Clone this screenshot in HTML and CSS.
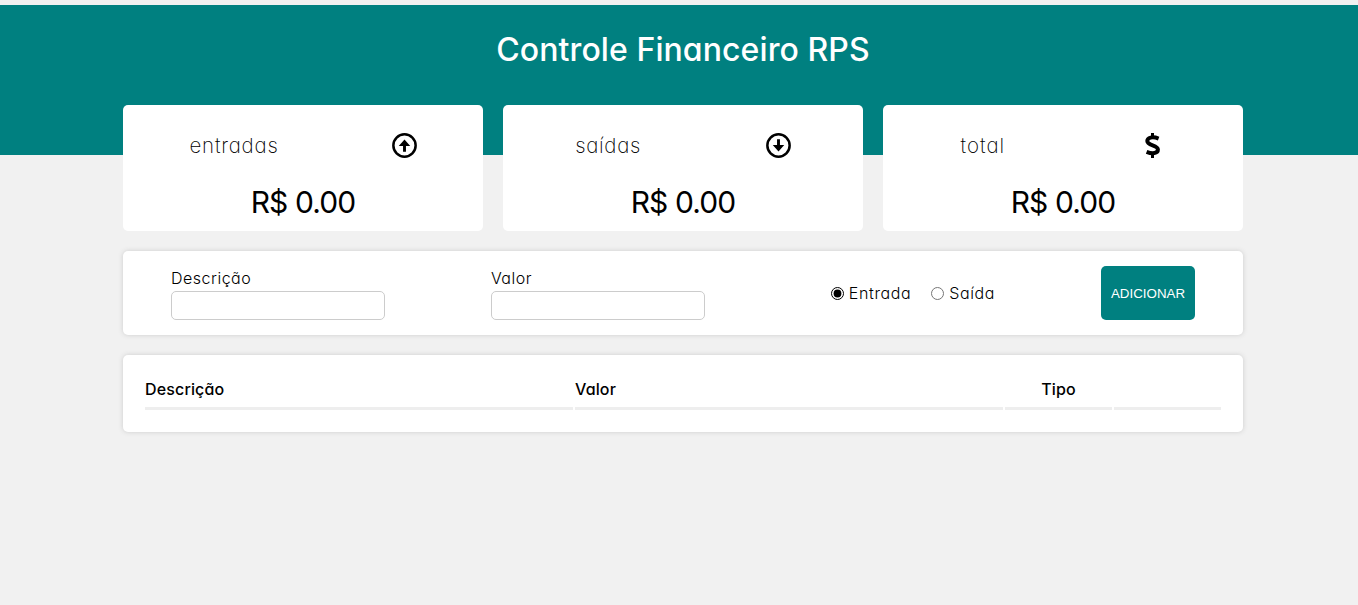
FILE: index.html
```
<!DOCTYPE html>
<html lang="pt-br">
<head>
<meta charset="UTF-8">
<title>Controle Financeiro RPS</title>
<link rel="stylesheet" href="styles.css">
</head>
<body>
<header class="header"><h1 class="title">Controle Financeiro RPS</h1></header>
<main class="main">
  <section class="resume">
    <div class="card">
      <div class="card-head"><span class="label">entradas</span>
        <svg class="icon" viewBox="0 0 24 24"><circle cx="12" cy="12" r="10.7" fill="none" stroke="#000" stroke-width="2.4"/><path d="M10.600 18h2.800v-5.500h4.100L12 6.200 6.500 12.500h4.100z"/></svg></div>
      <div class="value">R$ 0.00</div>
    </div>
    <div class="card">
      <div class="card-head"><span class="label label-out">saídas</span>
        <svg class="icon" viewBox="0 0 24 24"><circle cx="12" cy="12" r="10.7" fill="none" stroke="#000" stroke-width="2.4"/><path d="M10.600 6h2.800v5.500h4.100L12 17.800 6.500 11.500h4.100z"/></svg></div>
      <div class="value">R$ 0.00</div>
    </div>
    <div class="card">
      <div class="card-head"><span class="label label-total">total</span>
        <svg class="icon" viewBox="0 0 25 25"><path d="M11 0h3v4h-3zM11 21h3v4h-3z"/><path d="M18.600 5.600C12.500 3.200 7.300 4.500 7.300 8.100c0 4.900 10.600 3.700 10.600 8.500 0 4-5.600 4.500-11.300 2.200" fill="none" stroke="#000" stroke-width="4"/></svg></div>
      <div class="value">R$ 0.00</div>
    </div>
  </section>
  <form class="form">
    <div class="field"><label for="desc">Descrição</label><input class="input" id="desc" type="text"></div>
    <div class="field"><label for="amount">Valor</label><input class="input" id="amount" type="text"></div>
    <div class="radios">
      <input class="radio" type="radio" name="type" id="income" checked><label for="income">Entrada</label>
      <input class="radio" type="radio" name="type" id="expense"><label for="expense">Saída</label>
    </div>
    <button class="button" type="button">ADICIONAR</button>
  </form>
  <section class="table">
    <div class="th">Descrição</div><div class="th">Valor</div><div class="th center">Tipo</div><div class="th"></div>
  </section>
</main>
</body>
</html>
```
FILE: styles.css
```
* { box-sizing: border-box; margin: 0; padding: 0; }
body {
  min-height: 605px;
  padding-top: 5px;
  background: #f1f1f1;
  color: #000;
  font-family: Inter, "Liberation Sans", sans-serif;
  font-weight: 300;
  font-feature-settings: "cv11", "ss03";
  overflow: hidden;
}
.header { height: 150px; padding: 25px 0 0 8px; background: teal; color: #fff; text-align: center; }
.title { font-size: 32px; line-height: 40px; font-weight: 500; letter-spacing: 0.08px; }
.main { width: 1128px; margin: -50px auto 0; padding-left: 8px; }
.resume { display: flex; gap: 20px; }
.card { width: 360px; height: 126px; padding: 27px 10px 0; border-radius: 5px; background: #fff; }
.card-head { display: flex; justify-content: space-around; align-items: center; height: 26px; }
.label { font-size: 20.5px; font-weight: 250; letter-spacing: 0.800px; white-space: nowrap; }
.label-out { letter-spacing: 0.65px; }
.label-total { letter-spacing: 1px; }
.icon { width: 25px; height: 25px; overflow: visible; }
.value { margin-top: 23px; font-size: 30px; line-height: 42px; font-weight: 400; letter-spacing: -0.9px; text-align: center; }
.form {
  display: flex; justify-content: space-between; align-items: center;
  height: 84px; margin-top: 20px; padding: 0 48px; border-radius: 5px; background: #fff; box-shadow: 0 0 5px #ccc;
}
.field { display: flex; flex-direction: column; width: 214px; }
.field label { height: 25px; font-size: 16px; line-height: 24px; letter-spacing: 0.5px; }
.input { height: 29px; margin-bottom: 1px; border: 1px solid #ccc; border-radius: 5px; }
.radios { display: flex; align-items: center; font-size: 16px; letter-spacing: 0.62px; }
.radio { width: 13px; height: 13px; margin: 0 5px 0 20px; accent-color: #000; }
.button { width: 94px; height: 54px; border: 0; border-radius: 5px; background: teal; color: #fff; font: 13.333px "Liberation Sans", Arial, sans-serif; }
.table {
  display: grid; grid-template-columns: 428px 428px 107px 107px; column-gap: 2px;
  height: 77px; margin-top: 20px; padding: 22px; border-radius: 5px; background: #fff; box-shadow: 0 0 5px #ccc;
}
.th { height: 33px; border-bottom: 3px solid #eee; font-size: 16px; line-height: 25px; font-weight: 500; letter-spacing: 0.15px; }
.center { text-align: center; }
```
